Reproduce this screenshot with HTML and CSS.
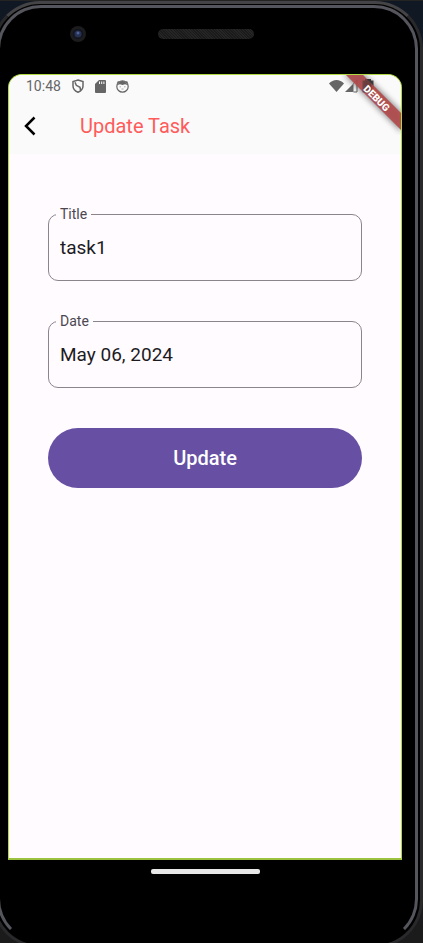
FILE: index.html
```html
<!DOCTYPE html>
<html lang="en">
<head>
<meta charset="utf-8">
<meta name="viewport" content="width=device-width, initial-scale=1">
<title>Update Task</title>
<link rel="stylesheet" href="styles.css">
</head>
<body>
<div class="phone">
  <div class="rim">
    <div class="hardware">
      <svg class="camera" viewBox="0 0 16 16" aria-hidden="true">
        <circle cx="8" cy="8" r="8" fill="#1c1c1e"/>
        <circle cx="8" cy="8" r="5" fill="#10131f"/>
        <circle cx="8" cy="8" r="3.6" fill="#26304f"/>
        <circle cx="8" cy="7" r="1.5" fill="#4a5f9c"/>
      </svg>
      <div class="speaker"></div>
    </div>
    <div class="screen">
      <header class="top">
        <div class="status">
          <span class="time">10:48</span>
          <svg class="shield" viewBox="0 0 12 14" aria-hidden="true">
            <path d="M6 1 11 2.6V7c0 2.700-2 5-5 6.200C3 12 1 9.700 1 7V2.600Z" fill="none" stroke="#666" stroke-width="1.500"/>
            <path d="M3 3.200 4.300 6.300 8 8.300 8.500 11" fill="none" stroke="#666" stroke-width="1.500"/>
          </svg>
          <svg class="card" viewBox="0 0 11 13" aria-hidden="true">
            <path d="M4 0h6a1 1 0 0 1 1 1v11a1 1 0 0 1-1 1H1a1 1 0 0 1-1-1V4Z" fill="#666"/>
            <path d="M4.500 1.500v2.500M6.700 1.500v2.500M8.900 1.500v2.500" stroke="#fafafa"/>
          </svg>
          <svg class="face" viewBox="0 0 13 13" aria-hidden="true">
            <circle cx="6.500" cy="6.500" r="5.700" fill="none" stroke="#666" stroke-width="1.200"/>
            <path d="M1.500 5C3 1.500 5 .9 6.500.9s3.500.6 5 4.100L9 4.300 6.500 5 4 4.300Z" fill="#666"/>
            <path d="M.5 3.500 1.800 1.200 3.500 1.500M12.500 3.500 11.200 1.200 9.500 1.500" fill="#666"/>
            <path d="M3.500 6.800h1.500M8 6.800h1.500M5.500 9h2" stroke="#999" stroke-width=".8"/>
          </svg>
          <span class="spacer"></span>
          <svg class="signals" viewBox="0 0 45 14" aria-hidden="true">
            <path d="M0 4.500C4-.2 11-.2 15 4.500L7.500 13Z" fill="#666"/>
            <path d="M16 13 24.500 4.500V13Z" fill="#666"/>
            <path d="M24.500 4.500 28 1V13H24.500" fill="none" stroke="#666" stroke-width="1"/>
            <path d="M38 0h4v1.500h2.500V13.500H35.500V1.500H38Z" fill="#4d4d4d"/>
          </svg>
        </div>
        <div class="bar">
          <button class="back" type="button" aria-label="Back">
            <svg viewBox="0 0 12 20" aria-hidden="true"><path d="M10.500 1.500 2 10 10.500 18.500" fill="none" stroke="#000" stroke-width="2.500"/></svg>
          </button>
          <h1>Update Task</h1>
        </div>
      </header>
      <form class="form">
        <div class="field">
          <label for="title">Title</label>
          <input id="title" type="text" value="task1">
        </div>
        <div class="field">
          <label for="date">Date</label>
          <input id="date" type="text" value="May 06, 2024">
        </div>
        <button class="update" type="button">Update</button>
      </form>
      <svg class="ribbon" viewBox="0 0 60 60" aria-hidden="true">
        <defs><filter id="soft" x="-30%" y="-30%" width="160%" height="160%"><feGaussianBlur stdDeviation="3"/></filter></defs>
        <path d="M3-1H22L61 38V57Z" fill="#000" opacity=".5" filter="url(#soft)"/>
        <path d="M4-1H21L61 39V56Z" fill="#b24a4b" fill-opacity=".9"/>
        <path d="M24 4h4v1.500h2.500V17.500H21.500V5.500H24Z" fill="#333" fill-opacity=".5"/>
        <text x="36" y="27" transform="rotate(45 36 23)" text-anchor="middle">DEBUG</text>
      </svg>
    </div>
    <div class="home"></div>
  </div>
</div>
</body>
</html>
```
FILE: styles.css
```css
* {
  box-sizing: border-box;
}

body {
  margin: 0;
  height: 100vh;
  overflow: hidden;
  background: linear-gradient(#101824, #1b1b1c);
  border-top: 1px solid #242424;
  font-family: Roboto, "Liberation Sans", sans-serif;
}

svg {
  display: block;
}

.phone {
  height: calc(100vh + 4px);
  margin: 0 0 0 -8px;
  padding: 1px 2px 2px;
  border: 3px solid #29292b;
  border-top-color: #444447;
  border-radius: 48px;
  background: #000;
}

.rim {
  display: flex;
  flex-direction: column;
  height: 100%;
  padding: 0 13px 0 8px;
  border: 3px solid #55555d;
  border-bottom-color: transparent;
  border-radius: 44px;
}

.hardware {
  display: flex;
  align-items: center;
  flex: none;
  height: 66px;
  padding: 0 0 14px 62px;
}

.camera {
  width: 16px;
  height: 16px;
}

.speaker {
  width: 96px;
  height: 10px;
  margin-left: 72px;
  border-radius: 5px;
  background: repeating-linear-gradient(45deg, #252525 0 1px, #1b1b1b 1px 2px);
}

.screen {
  position: relative;
  flex: 1;
  overflow: hidden;
  border: 1px solid #b1d942;
  border-bottom: 2px solid #9cc03f;
  border-radius: 14px 14px 0 0;
  background: #fffbff;
}

.top {
  height: 79px;
  background: #fafafa;
}

.status {
  display: flex;
  align-items: center;
  height: 22px;
  padding: 0 27px 0 17px;
}

.time {
  font-size: 14px;
  color: #666;
}

.shield {
  width: 12px;
  height: 14px;
  margin-left: 11px;
}

.card {
  width: 11px;
  height: 13px;
  margin-left: 11px;
}

.face {
  width: 13px;
  height: 13px;
  margin-left: 10px;
}

.spacer {
  flex: 1;
}

.signals {
  width: 45px;
  height: 14px;
}

.bar {
  display: flex;
  align-items: center;
  height: 58px;
  padding-left: 15px;
}

.back {
  width: 56px;
  padding: 0;
  border: 0;
  background: none;
}

.back svg {
  width: 12px;
  height: 20px;
}

h1 {
  margin: 0;
  font-size: 20px;
  font-weight: 400;
  color: #ff5b5b;
}

.form {
  display: flex;
  flex-direction: column;
  gap: 40px;
  padding: 60px 39px 0;
}

.field {
  position: relative;
}

.field label {
  position: absolute;
  top: -8px;
  left: 8px;
  padding: 0 4px;
  background: #fffbff;
  font-size: 14px;
  line-height: 16px;
  color: #4b4750;
}

.field input {
  display: block;
  width: 100%;
  height: 67px;
  padding: 0 11px;
  border: 1px solid #8a858c;
  border-radius: 10px;
  background: transparent;
  font-family: inherit;
  font-size: 19px;
  color: #1d1b1f;
}

.update {
  height: 60px;
  border: 0;
  border-radius: 30px;
  background: #6750a4;
  font-family: inherit;
  font-size: 20px;
  font-weight: 500;
  color: #fff;
}

.ribbon {
  position: absolute;
  top: 0;
  right: 0;
  width: 60px;
  height: 60px;
}

.ribbon text {
  fill: #fff;
  font-size: 10px;
  font-weight: 900;
}

.home {
  flex: none;
  align-self: center;
  width: 109px;
  height: 5px;
  margin: 9px 0 66px;
  border-radius: 2px;
  background: #e8e8e8;
}
```
